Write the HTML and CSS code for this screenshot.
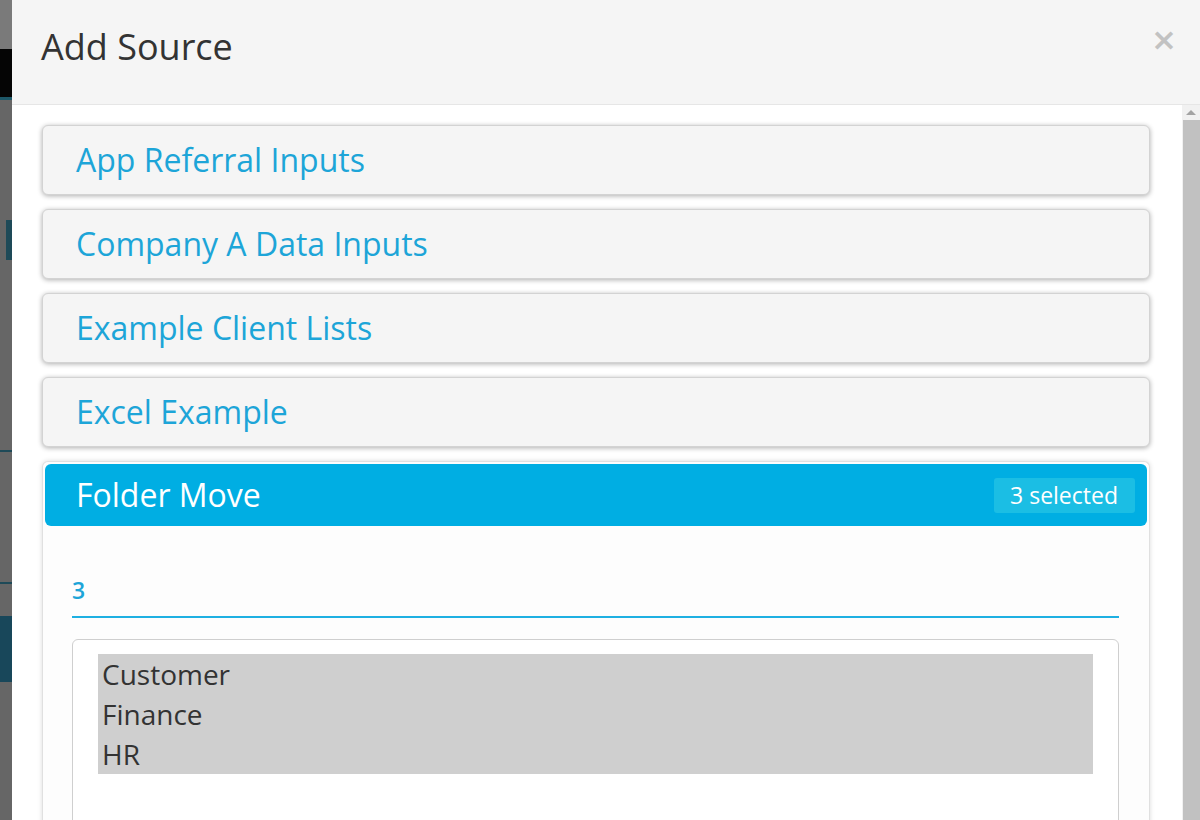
FILE: index.html
```html
<!DOCTYPE html>
<html>
<head>
<meta charset="utf-8">
<link rel="stylesheet" href="styles.css">
</head>
<body>
<div class="page">
  <div class="backdrop">
    <div class="bd-top"></div>
    <div class="bd-black"></div>
    <div class="bd-line teal"></div>
    <div class="bd-gap g1"></div>
    <div class="bd-mark m1"></div>
    <div class="bd-gap g2"></div>
    <div class="bd-line dark"></div>
    <div class="bd-gap g3"></div>
    <div class="bd-line dark"></div>
    <div class="bd-gap g4"></div>
    <div class="bd-block"></div>
    <div class="bd-rest"></div>
  </div>
  <div class="modal">
    <div class="modal-header">
      <h1 class="modal-title">Add Source</h1>
      <span class="close">&times;</span>
    </div>
    <div class="modal-body">
      <div class="content">
        <div class="panel"><span class="panel-title">App Referral Inputs</span></div>
        <div class="panel"><span class="panel-title">Company A Data Inputs</span></div>
        <div class="panel"><span class="panel-title">Example Client Lists</span></div>
        <div class="panel"><span class="panel-title">Excel Example</span></div>
        <div class="panel-active">
          <div class="active-heading">
            <span class="active-title">Folder Move</span>
            <span class="badge">3 selected</span>
          </div>
          <div class="active-body">
            <div class="field-label">3</div>
            <div class="select-box">
              <div class="option">Customer</div>
              <div class="option">Finance</div>
              <div class="option">HR</div>
            </div>
          </div>
        </div>
      </div>
      <div class="scrollbar">
        <div class="arrow"></div>
        <div class="thumb"></div>
      </div>
    </div>
  </div>
</div>
</body>
</html>
```
FILE: styles.css
```css
* { box-sizing: border-box; }
html, body { margin: 0; padding: 0; height: 100%; overflow: hidden; }
body { font-family: "Open Sans", "DejaVu Sans", sans-serif; background: #6b6b6b; }

.page { display: flex; height: 820px; width: 1200px; overflow: hidden; }

.backdrop { width: 12px; flex: none; display: flex; flex-direction: column; background: #666; }
.bd-top { height: 49px; background: #7a7a7a; }
.bd-black { height: 48px; background: #050505; }
.bd-line { height: 3px; }
.bd-line.teal { background: #1d5868; }
.bd-line.dark { height: 2px; background: #1e4a58; }
.g1 { height: 120px; }
.bd-mark { height: 40px; background: linear-gradient(to right, transparent 6px, #1e4a58 6px); }
.g2 { height: 190px; }
.g3 { height: 130px; }
.g4 { height: 32px; }
.bd-block { height: 66px; background: #18475a; }
.bd-rest { flex: 1; }

.modal { flex: 1; display: flex; flex-direction: column; background: #fff; min-width: 0; }

.modal-header {
  height: 105px; flex: none;
  background: #f5f5f5;
  border-bottom: 1px solid #e6e6e6;
  display: flex; align-items: flex-start; justify-content: space-between;
  padding: 0 23px 0 29px;
}
.modal-title {
  margin: 22px 0 0 0;
  font-size: 36px; font-weight: 400; color: #333; line-height: 50px;
}
.close {
  margin-top: 22px;
  font-size: 31px; line-height: 34px; font-weight: 700; color: #c2c2c2;
  font-family: "DejaVu Sans", sans-serif;
}

.modal-body { flex: 1; display: flex; min-height: 0; }
.content { flex: 1; padding: 20px 32px 0 30px; display: flex; flex-direction: column; gap: 14px; min-width: 0; }

.panel {
  height: 70px; flex: none;
  background: #f5f5f5;
  border: 1px solid #d3d3d3;
  border-radius: 6px;
  box-shadow: 0 1px 5px rgba(0,0,0,0.32);
  display: flex; align-items: center;
  padding-left: 33px;
}
.panel-title { font-size: 32px; color: #1da5d8; line-height: 40px; }

.panel-active {
  flex: 1;
  border: 1px solid #e0e0e0;
  border-bottom: none;
  border-radius: 6px 6px 0 0;
  box-shadow: 0 0 5px rgba(0,0,0,0.14);
  padding: 2px 2px 0 2px;
  background: #fdfdfd;
  display: flex; flex-direction: column;
}
.active-heading {
  height: 62px; flex: none;
  background: #00aee3;
  border-radius: 6px;
  display: flex; align-items: center; justify-content: space-between;
  padding: 0 12px 0 31px;
}
.active-title { font-size: 32px; color: #fff; font-weight: 500; line-height: 40px; }
.badge {
  background: #1bbee4;
  color: #fff;
  font-size: 23px; line-height: 35px;
  padding: 0 17px 0 16px;
  border-radius: 3px;
}
.active-body { padding: 48px 28px 0 27px; flex: 1; background: #fdfdfd; }
.field-label {
  font-size: 23px; font-weight: 600; color: #1da5d8;
  line-height: 32px; padding-bottom: 10px;
  border-bottom: 2px solid #1eb0e2;
}
.select-box {
  margin-top: 21px;
  background: #fff;
  border: 1px solid #cfcfcf;
  border-radius: 6px;
  padding: 14px 25px 0 25px;
  height: 200px;
}
.option {
  background: #cfcfcf;
  color: #333;
  font-size: 28px; line-height: 40px;
  padding-left: 4px;
}

.scrollbar { width: 18px; flex: none; background: #f1f1f1; display: flex; flex-direction: column; }
.arrow {
  height: 15px; flex: none; position: relative;
}
.arrow::after {
  content: ""; position: absolute; left: 4px; top: 5px;
  border-left: 5px solid transparent; border-right: 5px solid transparent;
  border-bottom: 5px solid #a3a3a3;
}
.thumb { flex: 1; background: #c1c1c1; margin-left: 1px; }
```
